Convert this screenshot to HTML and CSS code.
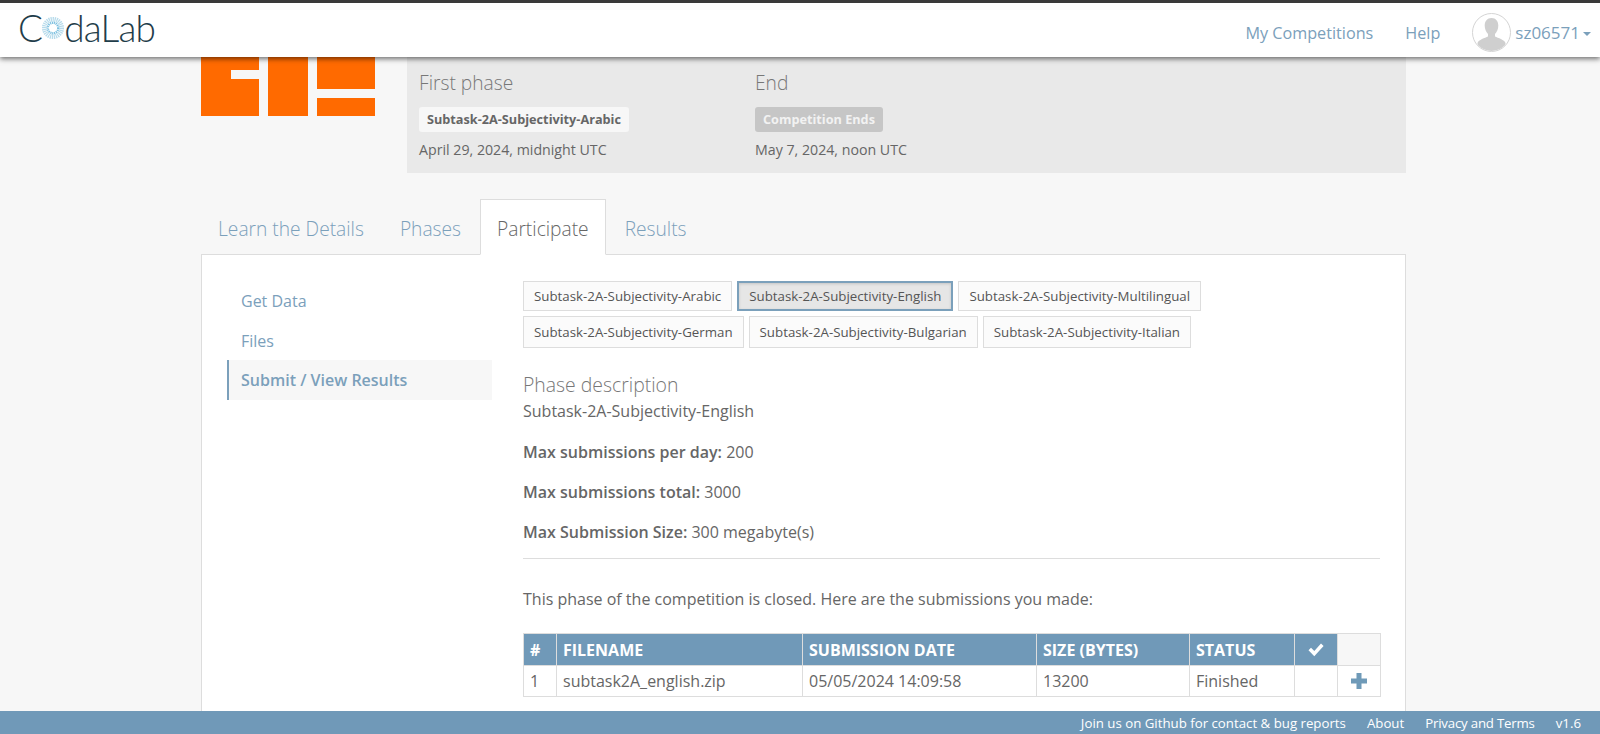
FILE: index.html
```html
<!DOCTYPE html>
<html lang="en">
<head>
    <meta charset="UTF-8">
    <title>CodaLab</title>
    <link rel="stylesheet" href="styles.css">
</head>
<body>
    <header class="navbar">
        <a class="brand" href="#">
            <span>C</span>
            <svg class="brand-ring" width="22" height="26" viewBox="0 0 22 26">
                <circle cx="11" cy="13" r="8.6" fill="none" stroke="#b7dbeb" stroke-width="5" stroke-dasharray="1.2 0.7"/>
                <circle cx="11" cy="13" r="5.2" fill="none" stroke="#7cc0e0" stroke-width="2.2" stroke-dasharray="1.2 0.7"/>
            </svg>
            <span>daLab</span>
        </a>
        <nav class="nav-links">
            <a href="#">My Competitions</a>
            <a href="#">Help</a>
            <a class="user" href="#">
                <svg class="avatar" width="39" height="39" viewBox="0 0 39 39">
                    <defs><clipPath id="avatarClip"><circle cx="19.5" cy="19.5" r="18.5"/></clipPath></defs>
                    <circle cx="19.5" cy="19.5" r="19" fill="#fff" stroke="#d4d4d4"/>
                    <g clip-path="url(#avatarClip)" fill="#cfcfcf">
                        <path d="M19.5 5c4.300 0 6.800 3.200 6.800 7.600 0 3.400-1.300 6.500-3.300 8.300v2.600c3 1.500 9.500 3.200 10.500 6.500v9H5.500v-9c1-3.300 7.500-5 10.500-6.500v-2.600c-2-1.800-3.300-4.900-3.300-8.300C12.700 8.200 15.200 5 19.500 5z"/>
                    </g>
                </svg>
                <span>sz06571</span>
                <i class="caret"></i>
            </a>
        </nav>
    </header>

    <main class="page">
        <div class="container">
            <section class="comp-head">
                <div class="comp-logo">
                    <div class="logo-a"><i></i></div>
                    <div class="logo-b"></div>
                    <div class="logo-c"><i></i><i></i></div>
                </div>
                <div class="phases-box">
                    <div class="phase-col">
                        <h4>First phase</h4>
                        <span class="label">Subtask-2A-Subjectivity-Arabic</span>
                        <p>April 29, 2024, midnight UTC</p>
                    </div>
                    <div class="phase-col">
                        <h4>End</h4>
                        <span class="label label-end">Competition Ends</span>
                        <p>May 7, 2024, noon UTC</p>
                    </div>
                </div>
            </section>

            <ul class="tabs">
                <li><a href="#">Learn the Details</a></li>
                <li><a href="#">Phases</a></li>
                <li class="active"><a href="#">Participate</a></li>
                <li><a href="#">Results</a></li>
            </ul>

            <section class="panel">
                <ul class="side-nav">
                    <li><a href="#">Get Data</a></li>
                    <li><a href="#">Files</a></li>
                    <li class="active"><a href="#">Submit / View Results</a></li>
                </ul>
                <div class="content">
                    <div class="phase-buttons">
                        <button class="short">Subtask-2A-Subjectivity-Arabic</button>
                        <button class="short selected">Subtask-2A-Subjectivity-English</button>
                        <button class="short">Subtask-2A-Subjectivity-Multilingual</button>
                        <button>Subtask-2A-Subjectivity-German</button>
                        <button>Subtask-2A-Subjectivity-Bulgarian</button>
                        <button>Subtask-2A-Subjectivity-Italian</button>
                    </div>
                    <h4 class="desc-title">Phase description</h4>
                    <p class="desc-name">Subtask-2A-Subjectivity-English</p>
                    <p class="limit"><b>Max submissions per day:</b> 200</p>
                    <p class="limit"><b>Max submissions total:</b> 3000</p>
                    <p class="limit"><b>Max Submission Size:</b> 300 megabyte(s)</p>
                    <hr>
                    <p class="closed">This phase of the competition is closed. Here are the submissions you made:</p>
                    <table class="submissions">
                        <thead>
                            <tr>
                                <th class="col-num">#</th>
                                <th class="col-file">FILENAME</th>
                                <th class="col-date">SUBMISSION DATE</th>
                                <th class="col-size">SIZE (BYTES)</th>
                                <th class="col-status">STATUS</th>
                                <th class="col-check">
                                    <svg width="18" height="15" viewBox="0 0 18 15"><path d="M1.500 8.200 4 5.700l3.300 3.300L14 1.500l2.600 2.400-9.300 10.300z" fill="#fff"/></svg>
                                </th>
                                <th class="col-plus"></th>
                            </tr>
                        </thead>
                        <tbody>
                            <tr>
                                <td>1</td>
                                <td>subtask2A_english.zip</td>
                                <td>05/05/2024 14:09:58</td>
                                <td>13200</td>
                                <td>Finished</td>
                                <td></td>
                                <td class="plus-cell">
                                    <svg width="16" height="16" viewBox="0 0 16 16"><path d="M5.500 0h5v5.500H16v5h-5.500V16h-5v-5.500H0v-5h5.500z" fill="#6f9ab8"/></svg>
                                </td>
                            </tr>
                        </tbody>
                    </table>
                </div>
            </section>
        </div>
    </main>

    <footer class="footer">
        <a href="#">Join us on Github for contact &amp; bug reports</a>
        <a href="#">About</a>
        <a class="terms" href="#">Privacy and Terms</a>
        <span>v1.6</span>
    </footer>
</body>
</html>
```

FILE: styles.css
```css
* {
    box-sizing: border-box;
}

html, body {
    height: 100%;
}

body {
    margin: 0;
    display: flex;
    flex-direction: column;
    height: 100vh;
    overflow: hidden;
    font-family: "Open Sans", "Noto Sans", sans-serif;
    font-size: 16px;
    color: #666;
    background-color: #f7f7f7;
}

a {
    text-decoration: none;
    color: inherit;
}

/* top bar */
.navbar {
    position: relative;
    z-index: 5;
    flex: none;
    display: flex;
    justify-content: space-between;
    align-items: center;
    height: 57px;
    padding: 0 9px 0 18px;
    background-color: #fff;
    border-top: 3px solid #3a3a3a;
    box-shadow: 0 2px 5px rgba(0, 0, 0, 0.55);
}

.brand {
    display: flex;
    align-items: center;
    margin-bottom: 5px;
    font-family: Lato, sans-serif;
    font-weight: 300;
    font-size: 37px;
    letter-spacing: -0.8px;
    line-height: 1;
    color: #1f3d4a;
}

.nav-links {
    display: flex;
    align-items: center;
    padding-top: 5px;
    font-size: 16.200px;
    color: #7ba0bb;
}

.nav-links > a {
    margin-right: 32px;
}

.nav-links > a.user {
    display: flex;
    align-items: center;
    margin-right: 0;
    font-size: 17px;
}

.avatar {
    margin-right: 4px;
}

.caret {
    width: 0;
    height: 0;
    margin-left: 3px;
    margin-top: 2px;
    border-top: 4px solid #7ba0bb;
    border-left: 4px solid transparent;
    border-right: 4px solid transparent;
}

/* scrolled page area */
.page {
    flex: 1;
    min-height: 0;
    overflow: hidden;
}

.container {
    width: 1205px;
    margin-left: 201px;
}

.comp-head {
    display: flex;
    gap: 32px;
}

.comp-logo {
    flex: none;
    display: flex;
    gap: 9px;
    width: 174px;
    height: 59px;
}

.logo-a {
    position: relative;
    width: 58px;
    background-color: #ff6a00;
}

.logo-a i {
    position: absolute;
    top: 13px;
    right: 0;
    width: 28px;
    height: 9px;
    background-color: #f7f7f7;
}

.logo-b {
    width: 40px;
    background-color: #ff6a00;
}

.logo-c {
    display: flex;
    flex-direction: column;
    gap: 9px;
    width: 58px;
}

.logo-c i {
    display: block;
    background-color: #ff6a00;
}

.logo-c i:first-child {
    height: 32px;
}

.logo-c i:last-child {
    height: 18px;
}

.phases-box {
    flex: 1;
    display: flex;
    height: 116px;
    padding: 13px 12px 0;
    background-color: #e9e9e9;
}

.phase-col {
    width: 336px;
}

.phase-col h4 {
    margin: 0 0 11px;
    font-weight: 300;
    font-size: 19.200px;
    line-height: 26px;
    color: #777;
}

.label {
    display: inline-block;
    height: 25px;
    padding: 0 8px;
    line-height: 25px;
    font-size: 12.700px;
    font-weight: 700;
    color: #666;
    background-color: #f7f7f7;
    border-radius: 3px;
}

.label-end {
    color: #f2f2f2;
    background-color: #c6c6c6;
}

.phase-col p {
    margin: 8px 0 0;
    font-size: 14.200px;
    line-height: 20px;
}

/* tabs */
.tabs {
    display: flex;
    gap: 2px;
    height: 56px;
    margin: 26px 0 -1px;
    padding: 0;
    list-style: none;
    font-weight: 300;
    font-size: 19.200px;
    color: #7ba0bb;
}

.tabs li {
    position: relative;
    z-index: 1;
}

.tabs a {
    display: block;
    height: 56px;
    padding: 0 16px;
    line-height: 57px;
    border: 1px solid transparent;
}

.tabs .active a {
    color: #666;
    background-color: #fff;
    border-color: #ddd;
    border-bottom-color: #fff;
}

/* panel */
.panel {
    display: flex;
    gap: 31px;
    min-height: 500px;
    padding: 26px 25px;
    background-color: #fff;
    border: 1px solid #ddd;
}

.side-nav {
    flex: none;
    width: 265px;
    margin: 0;
    padding: 0;
    list-style: none;
    color: #7ba0bb;
}

.side-nav a {
    display: block;
    height: 39.500px;
    padding-left: 12px;
    line-height: 41px;
    border-left: 2px solid transparent;
}

.side-nav .active a {
    font-weight: 600;
    background-color: #f7f7f7;
    border-left-color: #7ba0bb;
}

.content {
    flex: 1;
    min-width: 0;
}

.phase-buttons {
    display: flex;
    flex-wrap: wrap;
    gap: 5px;
}

.phase-buttons button {
    height: 32px;
    padding: 0 10px;
    font-family: inherit;
    font-size: 13.300px;
    color: #555;
    background-color: #fbfbfb;
    border: 1px solid #ddd;
}

.phase-buttons button.short {
    height: 30px;
}

.phase-buttons button.selected {
    background-color: #e6e6e6;
    border: 2px solid #7ba0bb;
    box-shadow: inset 0 1px 3px rgba(0, 0, 0, 0.15);
}

.desc-title {
    margin: 23px 0 0;
    font-weight: 300;
    font-size: 19.400px;
    line-height: 27px;
    color: #777;
}

.desc-name {
    margin: 0;
    line-height: 26px;
}

.limit {
    margin: 14px 0 0;
    line-height: 26px;
}

.desc-name + .limit {
    margin-top: 15px;
}

.limit b {
    font-weight: 600;
}

.content hr {
    margin: 13px 0 0;
    border: 0;
    border-top: 1px solid #ddd;
}

.closed {
    margin: 27px 0 0;
    line-height: 26px;
}

.submissions {
    width: 857px;
    margin-top: 21px;
    border-collapse: collapse;
    table-layout: fixed;
}

.submissions th, .submissions td {
    padding: 0 6px;
    text-align: left;
    border: 1px solid #ddd;
}

.submissions th {
    height: 32px;
    font-weight: 700;
    color: #fff;
    background-color: #7099b8;
}

.submissions td {
    height: 31px;
}

.submissions th.col-plus {
    background-color: #f7f7f7;
}

.col-num { width: 33px; }
.col-file { width: 246px; }
.col-date { width: 234px; }
.col-size { width: 153px; }
.col-status { width: 105px; }
.col-check { width: 43px; }
.col-plus { width: 43px; }

.submissions th.col-check, .plus-cell {
    text-align: center;
    padding: 0;
}

.submissions svg {
    display: block;
    margin: 0 auto;
}

/* footer */
.footer {
    position: relative;
    z-index: 5;
    flex: none;
    display: flex;
    justify-content: flex-end;
    align-items: center;
    gap: 21px;
    height: 23px;
    padding-right: 19px;
    font-size: 13.250px;
    color: #fff;
    background-color: #7099b8;
}

.terms {
    letter-spacing: -0.2px;
}
```
